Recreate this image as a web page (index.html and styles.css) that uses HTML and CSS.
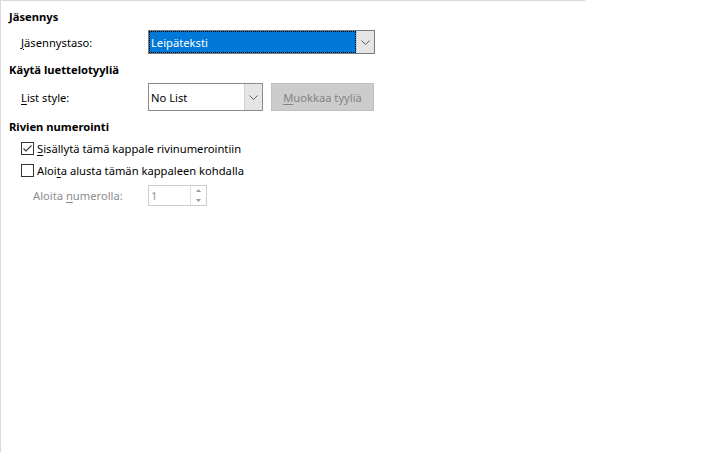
FILE: index.html
```html
<!DOCTYPE html>
<html>
<head>
<meta charset="utf-8">
<link rel="stylesheet" href="styles.css">
</head>
<body>
<div class="panel">
  <div class="heading h1">Jäsennys</div>
  <div class="row r-outline">
    <span class="label"><u>J</u>äsennystaso:</span>
    <div class="select sel-outline">
      <span class="sel-text focused">Leipäteksti</span>
      <span class="arrow"><svg width="9" height="5" viewBox="0 0 9 5"><path d="M0.5 0.5 L4.5 4.5 L8.5 0.5" fill="none" stroke="#606060" stroke-width="1"/></svg></span>
    </div>
  </div>
  <div class="heading h2">Käytä luettelotyyliä</div>
  <div class="row r-list">
    <span class="label"><u>L</u>ist style:</span>
    <div class="select sel-list">
      <span class="sel-text">No List</span>
      <span class="arrow"><svg width="9" height="5" viewBox="0 0 9 5"><path d="M0.5 0.5 L4.5 4.5 L8.5 0.5" fill="none" stroke="#606060" stroke-width="1"/></svg></span>
    </div>
    <div class="btn"><u>M</u>uokkaa tyyliä</div>
  </div>
  <div class="heading h3">Rivien numerointi</div>
  <div class="check c1">
    <span class="box"><svg width="11" height="11" viewBox="0 0 11 11"><path d="M1.5 5.5 L4 8 L9.5 2.5" fill="none" stroke="#333" stroke-width="1.1"/></svg></span>
    <span><u>S</u>isällytä tämä kappale rivinumerointiin</span>
  </div>
  <div class="check c2">
    <span class="box"></span>
    <span>Aloi<u>t</u>a alusta tämän kappaleen kohdalla</span>
  </div>
  <div class="row r-spin">
    <span class="label dim">Aloita <u>n</u>umerolla:</span>
    <div class="spin">
      <span class="spin-text">1</span>
      <span class="spin-btns">
        <span class="sb"><svg width="5" height="3" viewBox="0 0 5 3"><path d="M0 3 L2.5 0 L5 3Z" fill="#9a9a9a"/></svg></span>
        <span class="sb"><svg width="5" height="3" viewBox="0 0 5 3"><path d="M0 0 L2.5 3 L5 0Z" fill="#9a9a9a"/></svg></span>
      </span>
    </div>
  </div>
</div>
</body>
</html>
```
FILE: styles.css
```css
html, body {
  margin: 0;
  padding: 0;
  background: #ffffff;
}
body {
  width: 725px;
  height: 453px;
  overflow: hidden;
  font-family: "Noto Sans", "Open Sans", "Liberation Sans", sans-serif;
  font-size: 11.2px;
  color: #000;
}
u { text-decoration: underline; text-underline-offset: 2px; }
.panel {
  width: 585px;
  height: 452px;
  border-top: 1px solid #dadada;
  border-left: 1px solid #dadada;
  box-sizing: border-box;
  display: flex;
  flex-direction: column;
}
.heading {
  font-weight: bold;
  padding-left: 8px;
  height: 18px;
  line-height: 18px;
}
.h1 { margin-top: 7px; }
.h2 { margin-top: 7px; }
.h3 { margin-top: 7px; }
.row {
  display: flex;
  align-items: center;
}
.label {
  width: 127px;
  padding-left: 20px;
  flex: none;
}
.dim { color: #8d8d8d; padding-left: 32px; width: 115px; }
.r-outline { margin-top: 4px; height: 24px; }
.select {
  display: flex;
  box-sizing: border-box;
  border: 1px solid #7a7a7a;
  background: #fff;
}
.sel-outline { width: 227px; height: 24px; }
.sel-text {
  flex: 1;
  display: flex;
  align-items: center;
  padding-left: 2px;
}
.focused {
  background: #0078d7;
  color: #fff;
  outline: 1px dotted #000;
  outline-offset: -1px;
}
.arrow {
  width: 17px;
  flex: none;
  background: #e5e5e5;
  border-left: 1px solid #cfcfcf;
  display: flex;
  align-items: center;
  justify-content: center;
}
.r-list { margin-top: 4px; height: 28px; }
.sel-list { width: 115px; height: 28px; border-color: #8a8a8a; }
.btn {
  margin-left: 8px;
  width: 103px;
  height: 28px;
  box-sizing: border-box;
  background: #cccccc;
  border: 1px solid #bfbfbf;
  color: #838383;
  display: flex;
  align-items: center;
  justify-content: center;
}
.check {
  display: flex;
  align-items: center;
  height: 22px;
  padding-left: 20px;
}
.c1 { margin-top: 1px; }
.box {
  width: 13px;
  height: 13px;
  box-sizing: border-box;
  border: 1px solid #333;
  margin-right: 3px;
  display: flex;
  align-items: center;
  justify-content: center;
}
.box svg { display: block; }
.r-spin { margin-top: 4px; height: 21px; }
.spin {
  width: 59px;
  height: 21px;
  box-sizing: border-box;
  border: 1px solid #cdcdcd;
  display: flex;
}
.spin-text {
  flex: 1;
  color: #9a9a9a;
  padding-left: 2px;
  display: flex;
  align-items: center;
}
.spin-btns {
  width: 15px;
  display: flex;
  flex-direction: column;
  border-left: 1px solid #e0e0e0;
}
.sb {
  flex: 1;
  display: flex;
  align-items: center;
  justify-content: center;
}
.sb svg { display: block; }
```
